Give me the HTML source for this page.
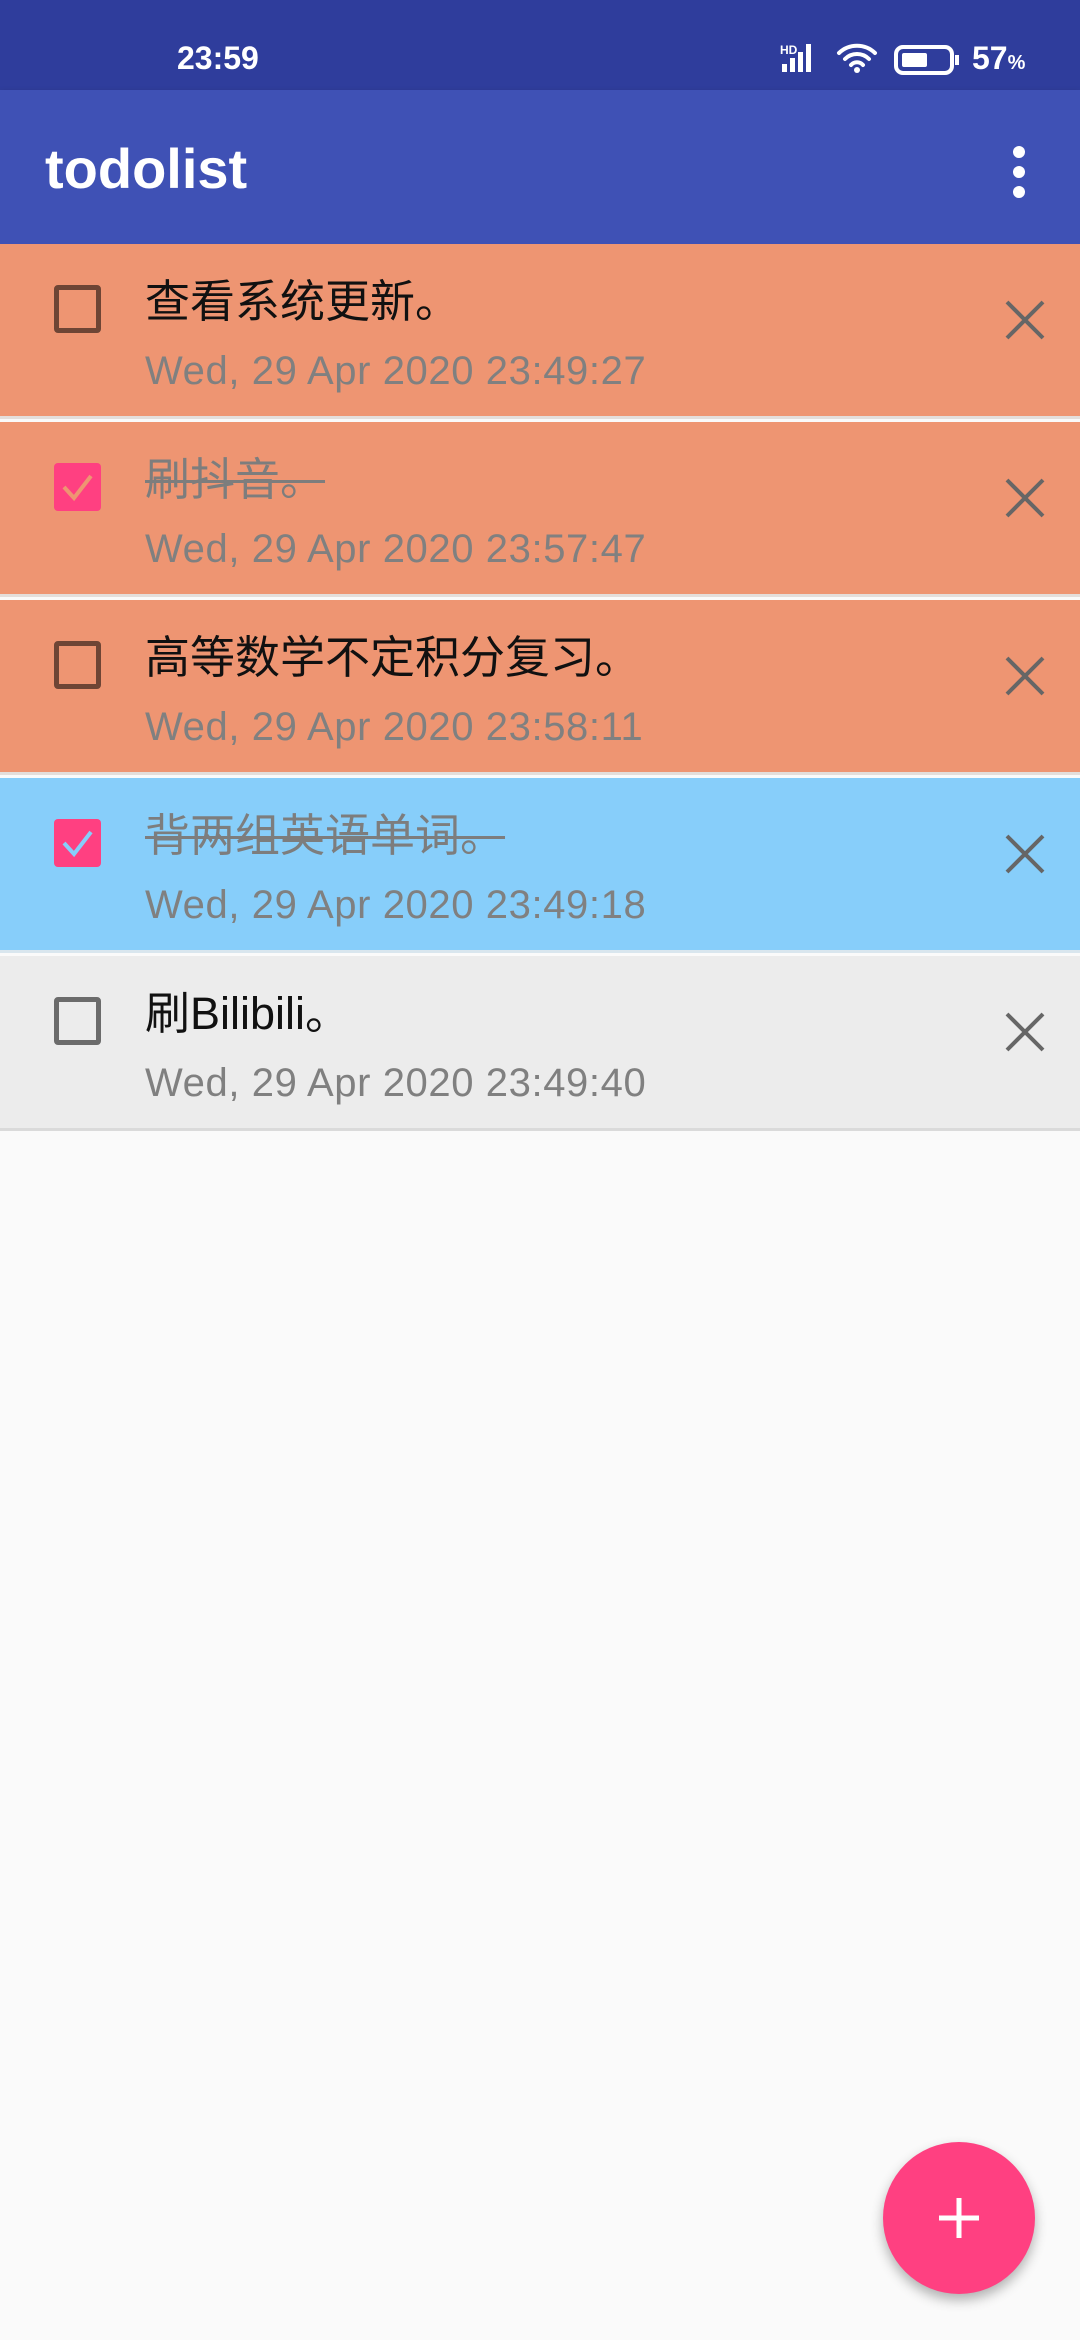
<!DOCTYPE html>
<html><head><meta charset="utf-8"><style>
*{margin:0;padding:0;box-sizing:border-box}
body{width:1080px;height:2340px;background:#FAFAFA;position:relative;overflow:hidden;font-family:"Liberation Sans","Noto Sans CJK SC",sans-serif}
.sb{position:absolute;left:0;top:0;width:1080px;height:90px;background:#2F3D9C}
.ab{position:absolute;left:0;top:90px;width:1080px;height:154px;background:#3F51B5;box-shadow:0 3px 6px rgba(0,0,0,.25)}
.row{position:absolute;left:0;width:1080px;height:175px;border-bottom:3px solid #E4DEDB}
.cb{position:absolute;left:54px;top:41px;width:47px;height:48px;border:5px solid #6E4535;border-radius:4px}
.cb.on{background:#FF4081;border:none}
.t{position:absolute;left:145px;top:30px;font-size:45px;color:#111;white-space:nowrap;line-height:56px}
.t.done{color:#7d7d7d;text-decoration:line-through;text-decoration-thickness:3px}
.d{position:absolute;left:145px;top:103px;font-size:40px;letter-spacing:0.6px;color:#808080;white-space:nowrap;line-height:48px}
.x{position:absolute;left:1003px;top:54px}
</style></head><body>
<div class="sb">
<div style="position:absolute;left:177px;top:40px;font-size:32px;color:#fff;font-weight:bold">23:59</div>
<div style="position:absolute;left:780px;top:43px;font-size:12px;color:#fff;font-weight:bold">HD</div>
<svg style="position:absolute;left:780px;top:42px" width="44" height="32"><rect x="2" y="22" width="5" height="8" fill="#fff"/><rect x="10" y="16" width="5" height="14" fill="#fff"/><rect x="18" y="10" width="5" height="20" fill="#fff"/><rect x="26" y="2" width="5" height="28" fill="#fff"/></svg>
<svg style="position:absolute;left:836px;top:42px" width="42" height="32"><path d="M3 11a26 26 0 0 1 36 0M9 17a17 17 0 0 1 24 0M15 23a8 8 0 0 1 12 0" stroke="#fff" stroke-width="4" fill="none" stroke-linecap="round"/><circle cx="21" cy="28" r="3" fill="#fff"/></svg>
<svg style="position:absolute;left:893px;top:44px" width="70" height="32"><rect x="3" y="3" width="56" height="26" rx="7" fill="none" stroke="#fff" stroke-width="4"/><rect x="9" y="9" width="25" height="14" rx="2" fill="#fff"/><rect x="62" y="11" width="4" height="10" fill="#fff"/></svg>
<div style="position:absolute;left:972px;top:40px;font-size:32px;color:#fff;font-weight:bold">57<span style="font-size:20px">%</span></div>
</div>
<div class="ab">
<div style="position:absolute;left:45px;top:46px;font-size:56px;color:#fff;font-weight:bold">todolist</div>
<div style="position:absolute;left:1013px;top:56px;width:12px;height:12px;border-radius:6px;background:#fff"></div>
<div style="position:absolute;left:1013px;top:76px;width:12px;height:12px;border-radius:6px;background:#fff"></div>
<div style="position:absolute;left:1013px;top:96px;width:12px;height:12px;border-radius:6px;background:#fff"></div>
</div>

<div class="row" style="top:244px;background:#EE9572">
<div class="cb"></div><div class="t">查看系统更新。</div><div class="d">Wed, 29 Apr 2020 23:49:27</div>
<svg class="x" width="44" height="44"><path d="M4 4L40 40M40 4L4 40" stroke="#666" stroke-width="4"/></svg></div>

<div class="row" style="top:422px;background:#EE9572">
<div class="cb on"><svg width="47" height="48"><path d="M10 24L20 35L37 13" stroke="#EE9572" stroke-width="4" fill="none"/></svg></div><div class="t done">刷抖音。</div><div class="d">Wed, 29 Apr 2020 23:57:47</div>
<svg class="x" width="44" height="44"><path d="M4 4L40 40M40 4L4 40" stroke="#666" stroke-width="4"/></svg></div>

<div class="row" style="top:600px;background:#EE9572">
<div class="cb"></div><div class="t">高等数学不定积分复习。</div><div class="d">Wed, 29 Apr 2020 23:58:11</div>
<svg class="x" width="44" height="44"><path d="M4 4L40 40M40 4L4 40" stroke="#666" stroke-width="4"/></svg></div>

<div class="row" style="top:778px;background:#87CEFA;border-bottom-color:#D9E6EE">
<div class="cb on"><svg width="47" height="48"><path d="M10 24L20 35L37 13" stroke="#87CEFA" stroke-width="4" fill="none"/></svg></div><div class="t done">背两组英语单词。</div><div class="d">Wed, 29 Apr 2020 23:49:18</div>
<svg class="x" width="44" height="44"><path d="M4 4L40 40M40 4L4 40" stroke="#666" stroke-width="4"/></svg></div>

<div class="row" style="top:956px;background:#ECECEC;border-bottom-color:#DADADA">
<div class="cb" style="border-color:#6b6b6b"></div><div class="t">刷Bilibili。</div><div class="d">Wed, 29 Apr 2020 23:49:40</div>
<svg class="x" width="44" height="44"><path d="M4 4L40 40M40 4L4 40" stroke="#666" stroke-width="4"/></svg></div>

<div style="position:absolute;left:883px;top:2142px;width:152px;height:152px;border-radius:50%;background:#FF4081;box-shadow:0 6px 12px rgba(0,0,0,.3)">
<svg width="152" height="152"><path d="M76 56V96M56 76H96" stroke="#fff" stroke-width="5"/></svg></div>
</body></html>
